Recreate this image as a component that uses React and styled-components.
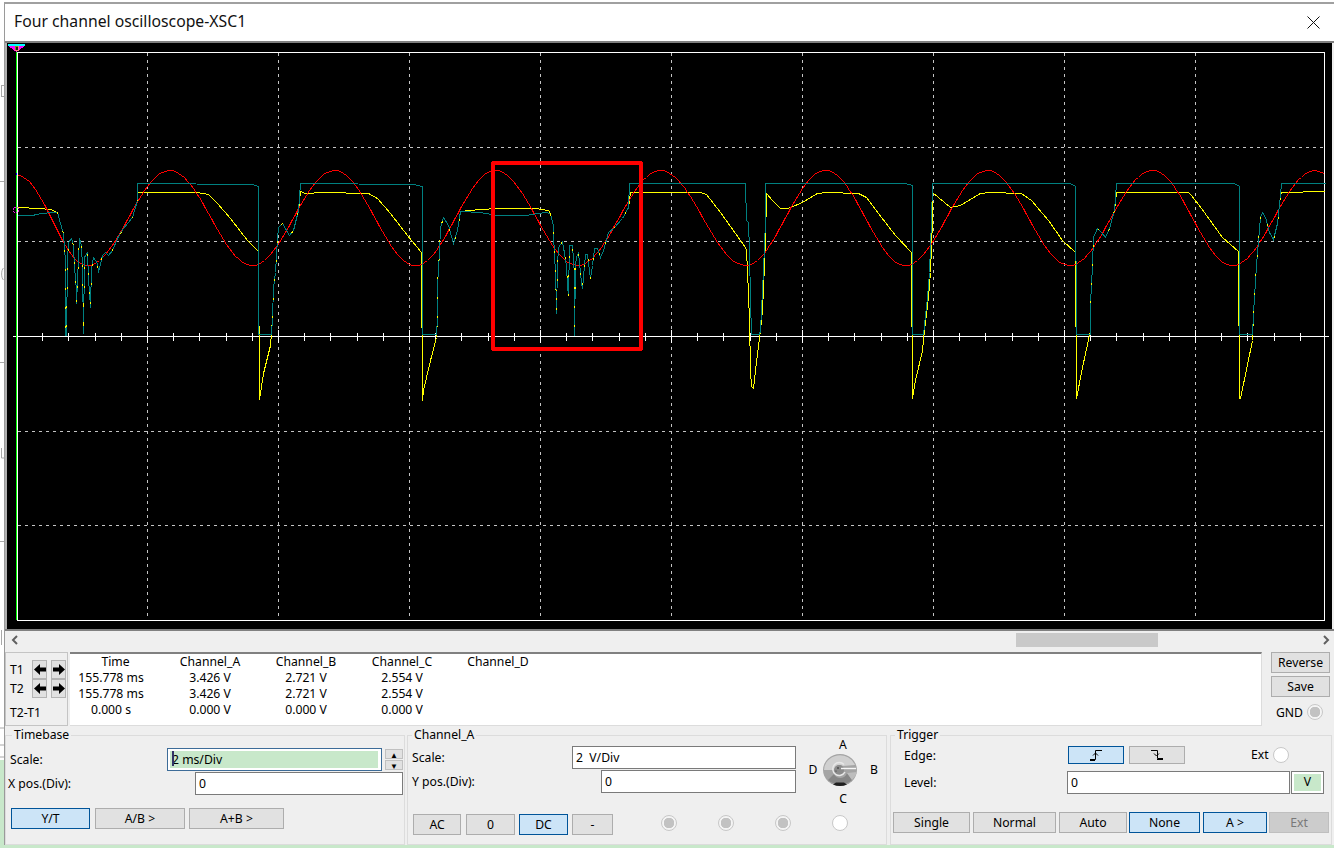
import styled, { createGlobalStyle } from "styled-components";

const GlobalStyle = createGlobalStyle`
  html, body { margin: 0; padding: 0; background: #fff; }
  body { font-family: "Noto Sans", "Open Sans", sans-serif; font-size: 12.2px; color: #000; }
`;

// wave data, in page pixels
const redPeaks = [
  [17, 175], [87, 265], [169, 170], [252, 265], [334, 170], [415, 265], [495, 170], [577, 265], [660, 170],
  [745, 265], [825, 170], [905, 265], [987, 170], [1069, 265], [1152, 170], [1232, 265], [1315, 170], [1325, 173],
];

const noiseA = [
  [57, 212], [60, 223], [63, 233], [64, 247], [65, 262], [65, 335], [66, 335], [67, 260], [68, 242], [71, 238], [73, 245], [74, 267],
  [76, 290], [76, 303], [78, 258], [79, 238], [81, 245], [82, 267], [83, 333], [84, 257], [87, 252], [88, 278], [90, 307],
  [91, 268], [93, 257], [97, 263], [98, 272], [102, 255], [105, 252], [108, 255], [112, 250], [117, 238], [123, 228], [132, 217], [137, 200],
];
const noiseB = [
  [550, 213], [553, 225], [554, 262], [555, 265], [556, 313], [557, 265], [558, 247], [562, 241], [563, 247], [566, 265], [567, 285], [568, 295],
  [569, 245], [572, 245], [574, 275], [574, 335], [575, 265], [576, 257], [578, 252], [581, 282], [582, 288], [585, 254], [587, 254], [590, 278],
  [592, 265], [594, 248], [597, 248], [600, 257], [603, 250], [608, 232], [613, 228], [622, 218], [628, 207],
];
const humpA = [[272, 318], [273, 287], [275, 272], [277, 238], [278, 227], [282, 223], [285, 228], [289, 235], [293, 230], [298, 210]];
const humpB = [[437, 317], [437, 285], [439, 252], [440, 227], [443, 217], [448, 225], [453, 243], [457, 230], [460, 211]];
const humpC = [[1090, 303], [1092, 265], [1093, 237], [1097, 228], [1101, 232], [1105, 237], [1109, 228], [1114, 210]];
const humpD = [[1253, 313], [1256, 265], [1260, 217], [1262, 212], [1265, 217], [1269, 232], [1273, 239], [1277, 223], [1280, 195]];

const tealPoints = [
  [17, 215], [33, 215], [35, 214], [50, 212], ...noiseA,
  [137, 183], [252, 184], [258, 186], [258, 334], [271, 334], ...humpA,
  [300, 183], [413, 184], [422, 186], [422, 334], [436, 334], ...humpB,
  [480, 212], [497, 215], [525, 215], [545, 212], ...noiseB,
  [629, 183], [745, 183], [746, 220], [748, 222], [749, 250], [750, 300], [751, 334], [759, 334], [760, 330], [763, 270], [765, 220],
  [765, 183], [905, 183], [912, 185], [912, 334], [923, 334], [927, 297], [929, 272], [931, 220],
  [932, 183], [1070, 183], [1075, 186], [1076, 334], [1090, 334], ...humpC,
  [1116, 183], [1234, 183], [1239, 186], [1239, 334], [1252, 334], ...humpD,
  [1281, 183], [1325, 183],
];

const yellowPoints = [
  [17, 207], [39, 208], [50, 209], ...noiseA,
  [137, 192], [160, 192], [197, 192], [208, 194], [217, 203], [230, 218], [247, 240], [258, 251],
  [259, 399], [263, 373], [270, 345], ...humpA,
  [300, 191], [305, 193], [322, 192], [368, 193], [377, 198], [390, 213], [407, 235], [421, 252],
  [422, 400], [423, 390], [430, 360], [436, 337], ...humpB,
  [480, 209], [497, 208], [535, 208], [548, 210], ...noiseB,
  [630, 192], [700, 192], [706, 194], [720, 212], [745, 247], [746, 250], [747, 270], [749, 320], [750, 370], [751, 386], [753, 388],
  [755, 370], [760, 330], [762, 310], [765, 242],
  [766, 193], [772, 200], [780, 208], [787, 208], [800, 203], [817, 193], [827, 192], [858, 193], [866, 197], [878, 213], [895, 235], [911, 252],
  [912, 398], [915, 380], [922, 350], [924, 330], [928, 297], [930, 272], [932, 220],
  [932, 192], [950, 207], [960, 205], [980, 193], [990, 192], [1021, 193], [1031, 200], [1048, 220], [1062, 240], [1075, 252],
  [1076, 398], [1082, 367], [1090, 330], ...humpC,
  [1116, 192], [1188, 192], [1191, 195], [1201, 208], [1222, 237], [1238, 251],
  [1239, 398], [1240, 398], [1252, 340], ...humpD,
  [1281, 192], [1325, 191],
];

// where yellow and teal run together only a few yellow pixels show through
const speckRuns = [noiseA, noiseB, humpA, humpB, humpC, humpD];

const redPoints = [];
redPeaks.slice(1).forEach(([x, y], i) => {
  const [px, py] = redPeaks[i];
  for (let cx = px; cx < x; cx += 3) {
    const t = (cx - px) / (x - px);
    redPoints.push([cx, Math.round(py + ((y - py) * (1 - Math.cos(Math.PI * t))) / 2)]);
  }
});

const toLine = (pts) => pts.map((p) => p.join(",")).join(" ");

const gridX = [147.5, 278.5, 409.5, 540.5, 671.5, 802.5, 933.5, 1064.5, 1195.5];
const gridY = [147.5, 241.5, 431.5, 525.5];
const ticks = [];
for (let i = 0; i < 50; i++) ticks.push(Math.floor(16.5 + i * 26.2) + 0.5);

const rows = [
  ["Time", "Channel_A", "Channel_B", "Channel_C", "Channel_D"],
  ["155.778 ms", "3.426 V", "2.721 V", "2.554 V", ""],
  ["155.778 ms", "3.426 V", "2.721 V", "2.554 V", ""],
  ["0.000 s", "0.000 V", "0.000 V", "0.000 V", ""],
];

const Chart = () => (
  <ChartSvg viewBox="7 43 1325 586">
    <rect x="17.5" y="52.5" width="1307" height="568" fill="none" stroke="#fff" />
    <g stroke="#c4c4c4" strokeDasharray="3 4">
      {gridX.map((x) => <line key={x} x1={x} x2={x} y1="53" y2="620" />)}
      {gridY.map((y) => <line key={y} x1="18" x2="1324" y1={y} y2={y} />)}
    </g>
    <line x1="13" x2="1329" y1="336.5" y2="336.5" stroke="#fff" />
    <g stroke="#fff">
      {ticks.map((x, i) => (
        <line key={x} x1={x} x2={x} y1={i % 5 === 0 ? 330 : 333} y2={i % 5 === 0 ? 343 : 341} />
      ))}
    </g>
    <g fill="none" strokeWidth="1" transform="translate(0.5 0.5)">
      <polyline points={toLine(yellowPoints)} stroke="#ffff00" />
      <polyline points={toLine(redPoints)} stroke="#ff0000" />
      <polyline points={toLine(tealPoints)} stroke="#008080" />
      {speckRuns.map((run) => (
        <polyline key={run[0][0]} points={toLine(run)} stroke="#ffff00" strokeDasharray="2 17" />
      ))}
    </g>
    <line x1="16.5" x2="16.5" y1="47" y2="620" stroke="#00ff00" />
    <polygon points="8,46 25,46 16.5,52" fill="#ff00ff" />
    <rect x="8" y="44" width="17" height="2" fill="#00ffff" />
    <rect x="15" y="46" width="3" height="4" fill="#1a1a1a" stroke="#ffff00" strokeWidth="0.5" />
    <rect x="16" y="173" width="1" height="2" fill="#0000ff" />
    <circle cx="16" cy="210" r="3" fill="none" stroke="#e020e0" strokeDasharray="2 1" />
    <rect x="493" y="163" width="148" height="186" rx="1" fill="none" stroke="#ff0000" strokeWidth="4" />
  </ChartSvg>
);

const ArrowIcon = ({ flip }) => (
  <svg width="12" height="11" viewBox="0 0 12 11" style={flip ? { transform: "scaleX(-1)" } : undefined}>
    <path d="M0 3.5H6V0L12 5.5 6 11V7.5H0Z" fill="#000" />
  </svg>
);

const EdgeIcon = ({ falling }) => (
  <svg width="14" height="11" viewBox="0 0 14 11" fill="none" stroke="#000">
    {falling ? (
      <path d="M1 .5H7.5V8.5H13M7 9.5H13M4 3.5L6.5 6 9 3.5" />
    ) : (
      <path d="M1 9.5H6.5V.5H13M1 10.5H6M4 5.5L6.5 3 9 5.5" />
    )}
  </svg>
);

const Knob = () => (
  <svg width="36" height="36" viewBox="0 0 36 36">
    <ellipse cx="18" cy="18" rx="17" ry="16" fill="#a4a4a4" />
    <path d="M2 18A16 15 0 0 1 33 13L21 14A6 6 0 0 0 12 18Z" fill="#d0d0d0" />
    <path d="M6 28A17 15 0 0 0 30 28L25 21A7 7 0 0 1 12 22Z" fill="#868686" />
    <path d="M25 21L35 20A17 16 0 0 1 30 28Z" fill="#bdbdbd" />
    <path d="M11 32.5A17 17 0 0 0 25 32.5L22 30.5H14Z" fill="#202020" />
    <circle cx="17" cy="18" r="5" fill="#8c8c8c" />
    <path d="M22 12.5A6.5 6.5 0 1 0 23 20" fill="none" stroke="#e8e8e8" strokeWidth="1.4" />
    <path d="M19 16.5H34" stroke="#f6f6f6" strokeWidth="1.4" />
    <circle cx="16" cy="16" r="0.8" fill="#222" />
    <circle cx="14" cy="19" r="0.6" fill="#333" />
  </svg>
);

// bits of the window behind, showing in the strip left of the scope
const BehindStrip = () => (
  <StripSvg viewBox="0 0 4 848">
    <g fill="none" stroke="#a8a8a8">
      <rect x="1.5" y="85.5" width="3" height="11" />
      <path d="M0 181.5H4M0 362.5H4M0 541.5H4" />
      <path d="M3.5 268C1 270 1 278 3.5 280" />
      <path d="M1.5 448V458H4M1.5 630V645M0 728H4M0 745H4M0 757H4" />
    </g>
  </StripSvg>
);

const App = () => (
  <Page>
    <GlobalStyle />
    <BehindStrip />
    <Window>
      <TitleBar>
        <Title>Four channel oscilloscope-XSC1</Title>
        <svg width="13" height="13" viewBox="0 0 13 13">
          <path d="M.5.5L12.5 12.5M12.5.5L.5 12.5" stroke="#111" />
        </svg>
      </TitleBar>
      <Screen><Chart /></Screen>
      <ScrollBar>
        <Chevron viewBox="0 0 8 10"><path d="M6 1L2 5l4 4" /></Chevron>
        <Thumb />
        <Chevron viewBox="0 0 8 10"><path d="M2 1l4 4-4 4" /></Chevron>
      </ScrollBar>

      <ReadoutRow>
        <CursorBox>
          <CursorRow>
            <CursorName>T1</CursorName>
            <ArrowButton><ArrowIcon flip /></ArrowButton>
            <ArrowButton><ArrowIcon /></ArrowButton>
          </CursorRow>
          <CursorRow>
            <CursorName>T2</CursorName>
            <ArrowButton><ArrowIcon flip /></ArrowButton>
            <ArrowButton><ArrowIcon /></ArrowButton>
          </CursorRow>
          <CursorName $top={6}>T2-T1</CursorName>
        </CursorBox>
        <ReadoutTable>
          {rows.map((row, r) => row.map((cell, c) => (
            <Cell key={`${r}-${c}`} $pull={c === 0 && r > 0 ? 9 : 0}>{cell}</Cell>
          )))}
        </ReadoutTable>
        <SideColumn>
          <Button $w={59}>Reverse</Button>
          <Button $w={59}>Save</Button>
          <GndRow>GND <Radio $on /></GndRow>
        </SideColumn>
      </ReadoutRow>

      <ControlsRow>
        <Group $w={400}>
          <Legend $left={6}>Timebase</Legend>
          <Field $top={5}>
            <FieldLabel $left={4}>Scale:</FieldLabel>
            <ActiveBox><ActiveFill><Caret />2 ms/Div</ActiveFill></ActiveBox>
            <Spinner>
              <SpinButton>▲</SpinButton>
              <SpinButton>▼</SpinButton>
            </Spinner>
          </Field>
          <Field $top={1}>
            <FieldLabel $left={2}>X pos.(Div):</FieldLabel>
            <TextBox $w={208} $right={1}>0</TextBox>
          </Field>
          <ButtonRow $top={13} $left={5}>
            <Button $w={79} $on>Y/T</Button>
            <Button $w={90} $ml={5}>A/B &gt;</Button>
            <Button $w={95} $ml={4}>A+B &gt;</Button>
          </ButtonRow>
        </Group>

        <Group $w={480} $ml={2}>
          <Legend $left={4}>Channel_A</Legend>
          <ChannelTop>
            <ChannelFields>
              <Field>
                <FieldLabel $left={4}>Scale:</FieldLabel>
                <TextBox $w={224} $right={2}>2&nbsp; V/Div</TextBox>
              </Field>
              <Field $top={1}>
                <FieldLabel $left={4}>Y pos.(Div):</FieldLabel>
                <TextBox $w={195} $right={2}>0</TextBox>
              </Field>
            </ChannelFields>
            <KnobGrid>
              <span />
              <KnobLetter $left={6}>A</KnobLetter>
              <span />
              <KnobLetter $left={6}>D</KnobLetter>
              <Knob />
              <KnobLetter $left={4}>B</KnobLetter>
              <span />
              <KnobLetter $left={6} $top={7}>C</KnobLetter>
            </KnobGrid>
          </ChannelTop>
          <ButtonRow $top={4} $left={5}>
            <Button $w={48}>AC</Button>
            <Button $w={49} $ml={5}>0</Button>
            <Button $w={49} $ml={4} $on>DC</Button>
            <Button $w={41} $ml={4}>-</Button>
            <RadioRow>
              <Radio $on />
              <Radio $on />
              <Radio $on />
              <Radio />
            </RadioRow>
          </ButtonRow>
        </Group>

        <Group $w={442} $ml={3}>
          <Legend $left={4}>Trigger</Legend>
          <Field $top={3} $left={13}>
            <TriggerLabel>Edge:</TriggerLabel>
            <Button $w={56} $h={18} $ml={1} $on><EdgeIcon /></Button>
            <Button $w={56} $h={18} $ml={5}><EdgeIcon falling /></Button>
            <ExtLabel>Ext</ExtLabel>
            <Radio />
          </Field>
          <Field $top={7} $left={13}>
            <TriggerLabel>Level:</TriggerLabel>
            <TextBox $w={223}>0</TextBox>
            <UnitBox><UnitFill>V</UnitFill></UnitBox>
          </Field>
          <ButtonRow $top={18} $left={2}>
            <Button $w={77}>Single</Button>
            <Button $w={83} $ml={3}>Normal</Button>
            <Button $w={68} $ml={3}>Auto</Button>
            <Button $w={71} $ml={2} $on>None</Button>
            <Button $w={64} $ml={3} $on>A &gt;</Button>
            <Button $w={60} $ml={2} $off>Ext</Button>
          </ButtonRow>
        </Group>
      </ControlsRow>
    </Window>
  </Page>
);

const Page = styled.div`
  position: relative;
  width: 1334px;
  height: 848px;
  box-sizing: border-box;
  padding: 2px 0 3px 4px;
  overflow: hidden;
  background: linear-gradient(#fff 0 760px, #c8e8ca 760px);
`;
const StripSvg = styled.svg`
  position: absolute;
  left: 0;
  top: 0;
  width: 4px;
  height: 848px;
`;
const Window = styled.div`
  height: 843px;
  box-sizing: border-box;
  display: flex;
  flex-direction: column;
  border-top: 2px solid #a0a0a0;
  border-left: 1px solid #9a9a9a;
  background: #efefef;
`;
const TitleBar = styled.div`
  height: 39px;
  flex: none;
  box-sizing: border-box;
  display: flex;
  align-items: center;
  justify-content: space-between;
  padding: 0 14px 0 9px;
  background: #fff;
  border-bottom: 2px solid #808080;
`;
const Title = styled.div`
  font-size: 15.75px;
  color: #111;
  padding-bottom: 3px;
`;
const Screen = styled.div`
  height: 586px;
  flex: none;
  margin-right: 2px;
  border-left: 2px solid #b0b0b0;
  background: #000;
`;
const ChartSvg = styled.svg`
  display: block;
  width: 1325px;
  height: 586px;
  shape-rendering: crispEdges;
`;
const ScrollBar = styled.div`
  height: 19px;
  flex: none;
  box-sizing: border-box;
  display: flex;
  align-items: center;
  padding: 0 4px 0 6px;
  border-top: 2px solid #808080;
`;
const Chevron = styled.svg`
  width: 8px;
  height: 10px;
  fill: none;
  stroke: #606060;
  stroke-width: 2;
`;
const Thumb = styled.div`
  width: 142px;
  height: 14px;
  margin-left: 997px;
  margin-right: auto;
  background: #c9c9c9;
`;
const ReadoutRow = styled.div`
  display: flex;
  flex: none;
  height: 74px;
  margin-top: 4px;
`;
const CursorBox = styled.div`
  width: 63px;
  box-sizing: border-box;
  padding: 7px 0 0 4px;
  border: 1px solid #c4c4c4;
`;
const CursorRow = styled.div`
  display: flex;
  align-items: center;
  height: 19px;
`;
const CursorName = styled.div`
  width: 22px;
  flex: none;
  margin-top: ${(p) => p.$top || 0}px;
  line-height: 18px;
  white-space: nowrap;
`;
const ArrowButton = styled.div`
  width: 15px;
  height: 19px;
  margin-right: 4px;
  flex: none;
  display: flex;
  align-items: center;
  justify-content: center;
  background: #e1e1e1;
  border: 1px solid #b4b4b4;
  box-sizing: border-box;
`;
const ReadoutTable = styled.div`
  width: 1192px;
  margin-left: 2px;
  box-sizing: border-box;
  display: grid;
  grid-template-columns: 93px repeat(4, 96px);
  grid-auto-rows: 16px;
  align-content: start;
  background: #fff;
  border-top: 2px solid #808080;
  border-right: 1px solid #dcdcdc;
  border-bottom: 1px solid #dcdcdc;
`;
const Cell = styled.div`
  text-align: center;
  line-height: 16px;
  white-space: nowrap;
  padding-right: ${(p) => p.$pull + 2}px;
`;
const SideColumn = styled.div`
  width: 59px;
  margin-left: 9px;
  display: flex;
  flex-direction: column;
  gap: 3px;
`;
const GndRow = styled.div`
  display: flex;
  align-items: center;
  justify-content: flex-end;
  gap: 4px;
  height: 24px;
  padding-right: 7px;
`;
const Radio = styled.span`
  display: inline-block;
  flex: none;
  width: 16px;
  height: 16px;
  box-sizing: border-box;
  border-radius: 50%;
  border: 1px solid #c8c8c8;
  background: ${(p) => (p.$on ? "radial-gradient(circle, #c2c2c2 0 5px, #f4f4f4 5.5px)" : "#fff")};
`;
const ControlsRow = styled.div`
  display: flex;
  flex: none;
  height: 118px;
  margin-top: 1px;
`;
const Group = styled.fieldset`
  width: ${(p) => p.$w}px;
  margin: 0 0 0 ${(p) => p.$ml || 0}px;
  padding: 0;
  box-sizing: border-box;
  min-width: 0;
  border: 1px solid #dcdcdc;
`;
const Legend = styled.legend`
  margin-left: ${(p) => p.$left}px;
  padding: 0 2px;
  line-height: 16px;
`;
const Field = styled.div`
  display: flex;
  align-items: center;
  margin-top: ${(p) => p.$top || 0}px;
  padding-left: ${(p) => p.$left || 0}px;
`;
const FieldLabel = styled.div`
  margin-right: auto;
  padding-left: ${(p) => p.$left}px;
  white-space: nowrap;
`;
const TextBox = styled.div`
  width: ${(p) => p.$w}px;
  height: 23px;
  margin-right: ${(p) => p.$right || 0}px;
  box-sizing: border-box;
  padding-left: 3px;
  line-height: 21px;
  background: #fff;
  border: 1px solid #7a7a7a;
`;
const ActiveBox = styled.div`
  width: 215px;
  height: 23px;
  box-sizing: border-box;
  padding: 2px;
  background: #fff;
  border: 1px solid #3d6c98;
`;
const ActiveFill = styled.div`
  position: relative;
  height: 17px;
  width: 206px;
  padding-left: 2px;
  box-sizing: content-box;
  line-height: 17px;
  background: #c8e8ca;
`;
const Caret = styled.span`
  position: absolute;
  left: 2px;
  top: 0;
  width: 2px;
  height: 15px;
  background: #333366;
`;
const Spinner = styled.div`
  width: 18px;
  margin-left: 3px;
  margin-right: 1px;
  display: flex;
  flex-direction: column;
  gap: 1px;
`;
const SpinButton = styled.div`
  height: 10px;
  font-size: 8px;
  line-height: 9px;
  text-align: center;
  background: #e1e1e1;
  border: 1px solid #c0c0c0;
  box-sizing: border-box;
`;
const ButtonRow = styled.div`
  display: flex;
  align-items: center;
  margin-top: ${(p) => p.$top}px;
  padding-left: ${(p) => p.$left}px;
`;
const Button = styled.div`
  width: ${(p) => p.$w}px;
  height: ${(p) => p.$h || 21}px;
  margin-left: ${(p) => p.$ml || 0}px;
  flex: none;
  box-sizing: border-box;
  display: flex;
  align-items: center;
  justify-content: center;
  background: ${(p) => (p.$on ? "#cce4f7" : p.$off ? "#cccccc" : "#e1e1e1")};
  border: 1px solid ${(p) => (p.$on ? "#005499" : p.$off ? "#bfbfbf" : "#adadad")};
  color: ${(p) => (p.$off ? "#787878" : "#000")};
`;
const ChannelTop = styled.div`
  display: flex;
  height: 72px;
  margin-top: -5px;
`;
const ChannelFields = styled.div`
  width: 390px;
  padding-top: 8px;
`;
const KnobGrid = styled.div`
  display: grid;
  grid-template-columns: 24px 36px 28px;
  grid-template-rows: 14px 36px 14px;
  align-items: center;
  justify-items: center;
`;
const KnobLetter = styled.div`
  line-height: 14px;
  margin-top: ${(p) => p.$top || 0}px;
  margin-left: ${(p) => p.$left || 0}px;
`;
const RadioRow = styled.div`
  display: flex;
  align-items: center;
  gap: 41px;
  margin-left: 48px;
  margin-top: -3px;
`;
const TriggerLabel = styled.div`
  width: 163px;
  flex: none;
`;
const ExtLabel = styled.div`
  margin: -2px 4px 0 66px;
`;
const UnitBox = styled.div`
  width: 33px;
  height: 23px;
  margin-left: 1px;
  box-sizing: border-box;
  padding: 2px;
  background: #fff;
  border: 1px solid #7a7a7a;
`;
const UnitFill = styled.div`
  height: 100%;
  text-align: center;
  line-height: 15px;
  background: #c8e8ca;
`;

export default App;
